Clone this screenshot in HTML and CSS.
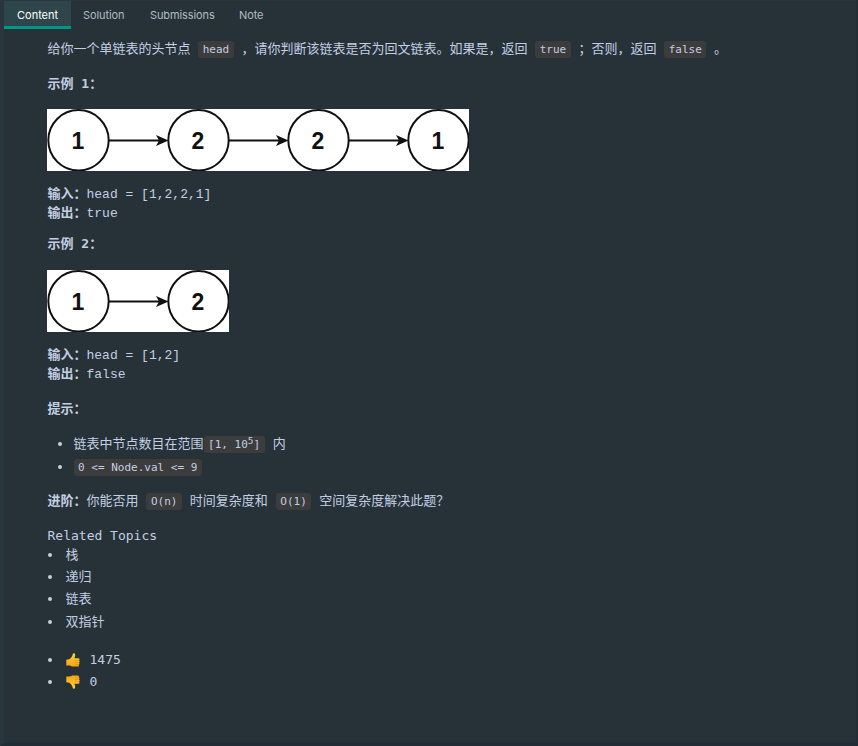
FILE: index.html
```html
<!DOCTYPE html>
<html lang="zh-CN">
<head>
<meta charset="utf-8">
<title>回文链表</title>
<link rel="stylesheet" href="styles.css">
</head>
<body>
<svg class="defs" width="0" height="0" aria-hidden="true">
  <defs>
    <linearGradient id="skin" x1="0" y1="0" x2="0" y2="1"><stop offset="0" stop-color="#ffd336"/><stop offset="1" stop-color="#f7a416"/></linearGradient>
    <g id="thumb">
      <path fill="url(#skin)" d="M.3 6.200 3.100 5.700C4.700 4.600 5.900 3.100 6.300.9 6.500-.1 8.400 0 8.500 1.700 8.600 3 8.200 4 7.800 4.800h3.600c1.400 0 1.500 1.700.5 2 1.200.2 1.100 1.900.1 2.100.9.3.7 1.800-.3 1.900.6.5.3 1.800-.7 1.800H7c-1.700 0-2.600-.6-3.700-1L.3 11.500z"/>
      <path fill="none" stroke="#d98a12" stroke-width=".5" d="M8.500 6.900h3.200M8.600 8.900h3.200M8.400 10.800h3"/>
    </g>
    <g id="link"><path d="M62 31.500h51" stroke="#111" stroke-width="2"/><path d="M121.500 31.500 109 26l3 5.500-3 5.500z" fill="#111"/></g>
    <circle id="node" cx="31.500" cy="31.300" r="30.200" fill="#fff" stroke="#111" stroke-width="2"/>
  </defs>
</svg>
<nav class="tabs">
  <a class="tab active">Content</a>
  <a class="tab solution">Solution</a>
  <a class="tab submissions">Submissions</a>
  <a class="tab note">Note</a>
</nav>
<main class="content">
  <p class="intro">给你一个单链表的头节点 <code>head</code> ，请你判断该链表是否为回文链表。如果是，返回 <code>true</code> ；否则，返回 <code>false</code> 。</p>
  <p class="heading"><b>示例 1：</b></p>
  <svg class="list" width="422" height="62" viewBox="0 0 422 62">
    <use href="#link"/><use href="#link" x="120"/><use href="#link" x="240"/>
    <use href="#node"/><use href="#node" x="120"/><use href="#node" x="240"/><use href="#node" x="360"/>
    <text x="31" y="40">1</text><text x="151" y="40">2</text><text x="271" y="40">2</text><text x="391" y="40">1</text>
  </svg>
<pre><b>输入：</b>head = [1,2,2,1]
<b>输出：</b>true</pre>
  <p class="heading second"><b>示例 2：</b></p>
  <svg class="list" width="182" height="62" viewBox="0 0 182 62">
    <use href="#link"/><use href="#node"/><use href="#node" x="120"/>
    <text x="31" y="40">1</text><text x="151" y="40">2</text>
  </svg>
<pre><b>输入：</b>head = [1,2]
<b>输出：</b>false</pre>
  <p class="hint"><b>提示：</b></p>
  <ul class="limits">
    <li>链表中节点数目在范围<code>[1, 10<sup>5</sup>]</code> 内</li>
    <li><code>0 &lt;= Node.val &lt;= 9</code></li>
  </ul>
  <p class="follow"><b>进阶：</b>你能否用 <code>O(n)</code> 时间复杂度和 <code>O(1)</code> 空间复杂度解决此题？</p>
  <div class="related">Related Topics</div>
  <ul class="topics"><li>栈</li><li>递归</li><li>链表</li><li>双指针</li></ul>
  <ul class="votes">
    <li><svg class="vote" viewBox="0 0 13 13"><use href="#thumb"/></svg>1475</li>
    <li><svg class="vote" viewBox="0 0 13 13"><use href="#thumb" transform="translate(0 13) scale(1 -1)"/></svg>0</li>
  </ul>
</main>
</body>
</html>
```
FILE: styles.css
```css
* { box-sizing: border-box; }
body {
  margin: 0;
  height: 746px;
  overflow: hidden;
  background: #263238;
  border-left: 4px solid #28373e;
  border-right: 2px solid #222d35;
  border-bottom: 3px solid #202c36;
  color: #c3cee3;
  font: 13px/20px "DejaVu Sans Mono", "Noto Sans CJK SC", monospace;
}
.defs { display: block; height: 0; }
.tabs {
  display: flex;
  height: 29px;
  border-top: 1px solid #28373e;
  font: 11px/29px Inter, sans-serif;
  letter-spacing: -.1px;
  color: #afbdc4;
}
.tab { padding: 0 13px; white-space: nowrap; }
.active { width: 67px; background: #2e464b; color: #fff; border-bottom: 3px solid #009688; letter-spacing: 0; }
.solution { width: 66px; padding-left: 12px; }
.submissions { width: 89px; }
.content { padding: 10px 0 0 43.500px; }
p, ul, pre { margin: 0; padding: 0; }
p { height: 20px; white-space: nowrap; }
code {
  font: 11px/17px "DejaVu Sans Mono", monospace;
  display: inline-block;
  height: 17px;
  padding: 0 4.600px;
  border-radius: 3px;
  background: #3c3c3c;
  vertical-align: 0;
}
sup { font-size: 9.500px; line-height: 0; vertical-align: 4px; }
.intro { word-spacing: -.2px; }
.heading { margin-top: 15px; }
.list { display: block; margin: 15px 0 0 -.5px; background: #fff; }
.list text { font: bold 23px "Liberation Sans", sans-serif; text-anchor: middle; fill: #111; }
pre { margin-top: 14px; height: 38px; font: 13px/19px "Liberation Mono", "Noto Sans CJK SC", monospace; }
.second { margin-top: 11px; }
.second + .list { margin-top: 16px; }
.hint { margin-top: 15px; }
ul { list-style: none; }
li { display: flex; align-items: center; white-space: pre; }
li::before { content: ""; flex: none; width: 4px; height: 4px; border-radius: 50%; background: #c3cee3; }
.limits { margin-top: 15px; padding-left: 10px; }
.limits li { height: 20px; margin-bottom: 3px; }
.limits li::before { margin-right: 12px; }
.follow { margin-top: 14px; }
.related { margin-top: 15px; height: 18px; }
.topics li, .votes li { height: 22.200px; }
.topics li::before, .votes li::before { margin-right: 14px; }
.votes { margin-top: 16px; }
.vote { width: 14px; height: 14px; margin-right: 10px; overflow: visible; }
```
